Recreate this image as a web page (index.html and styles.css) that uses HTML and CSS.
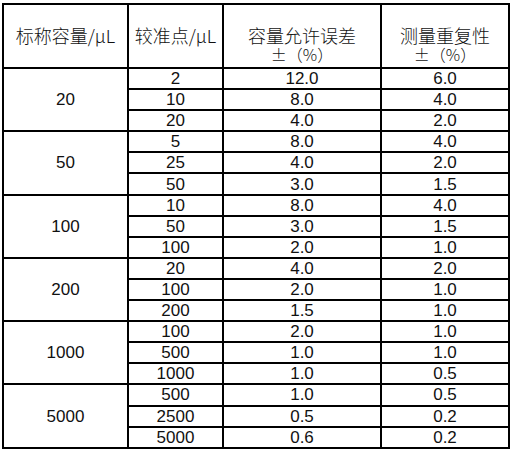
FILE: index.html
```html
<!DOCTYPE html>
<html lang="zh">
<head>
<meta charset="utf-8">
<link rel="stylesheet" href="styles.css">
</head>
<body>
<div class="wrap">
<table class="spec">
<colgroup>
<col class="c1"><col class="c2"><col class="c3"><col class="c4">
</colgroup>
<thead>
<tr class="head">
<th>标称容量/μL</th>
<th>较准点/μL</th>
<th>容量允许误差<span class="sub">±（%）</span></th>
<th>测量重复性<span class="sub">±（%）</span></th>
</tr>
</thead>
<tbody>
<tr><td rowspan="3">20</td><td>2</td><td>12.0</td><td>6.0</td></tr>
<tr><td>10</td><td>8.0</td><td>4.0</td></tr>
<tr><td>20</td><td>4.0</td><td>2.0</td></tr>
<tr><td rowspan="3">50</td><td>5</td><td>8.0</td><td>4.0</td></tr>
<tr><td>25</td><td>4.0</td><td>2.0</td></tr>
<tr><td>50</td><td>3.0</td><td>1.5</td></tr>
<tr><td rowspan="3">100</td><td>10</td><td>8.0</td><td>4.0</td></tr>
<tr><td>50</td><td>3.0</td><td>1.5</td></tr>
<tr><td>100</td><td>2.0</td><td>1.0</td></tr>
<tr><td rowspan="3">200</td><td>20</td><td>4.0</td><td>2.0</td></tr>
<tr><td>100</td><td>2.0</td><td>1.0</td></tr>
<tr><td>200</td><td>1.5</td><td>1.0</td></tr>
<tr><td rowspan="3">1000</td><td>100</td><td>2.0</td><td>1.0</td></tr>
<tr><td>500</td><td>1.0</td><td>1.0</td></tr>
<tr><td>1000</td><td>1.0</td><td>0.5</td></tr>
<tr><td rowspan="3">5000</td><td>500</td><td>1.0</td><td>0.5</td></tr>
<tr><td>2500</td><td>0.5</td><td>0.2</td></tr>
<tr><td>5000</td><td>0.6</td><td>0.2</td></tr>
</tbody>
</table>
</div>
</body>
</html>
```
FILE: styles.css
```css
html, body {
  margin: 0;
  padding: 0;
  background: #fff;
}
.wrap {
  padding: 3px 0 0 2px;
}
.spec {
  border-collapse: collapse;
  table-layout: fixed;
  width: 506px;
  font-family: "Liberation Sans", "Noto Sans CJK SC", sans-serif;
  font-size: 17px;
  color: #111;
}
.c1 { width: 125px; }
.c2 { width: 95px; }
.c3 { width: 158px; }
.c4 { width: 128px; }
.spec th, .spec td {
  border: 2px solid #000;
  padding: 0;
  text-align: center;
  vertical-align: middle;
  line-height: 19px;
  font-weight: normal;
  overflow: hidden;
  white-space: nowrap;
}
.spec .head {
  height: 64px;
}
.spec th {
  font-family: "Noto Sans CJK SC", sans-serif;
  font-size: 18px;
  font-weight: 300;
  line-height: 20px;
  vertical-align: top;
  padding-top: 20px;
  height: 42px;
}
.spec tbody tr {
  height: 21.1px;
}
.sub {
  display: block;
  font-size: 16px;
  line-height: 19px;
}
```
